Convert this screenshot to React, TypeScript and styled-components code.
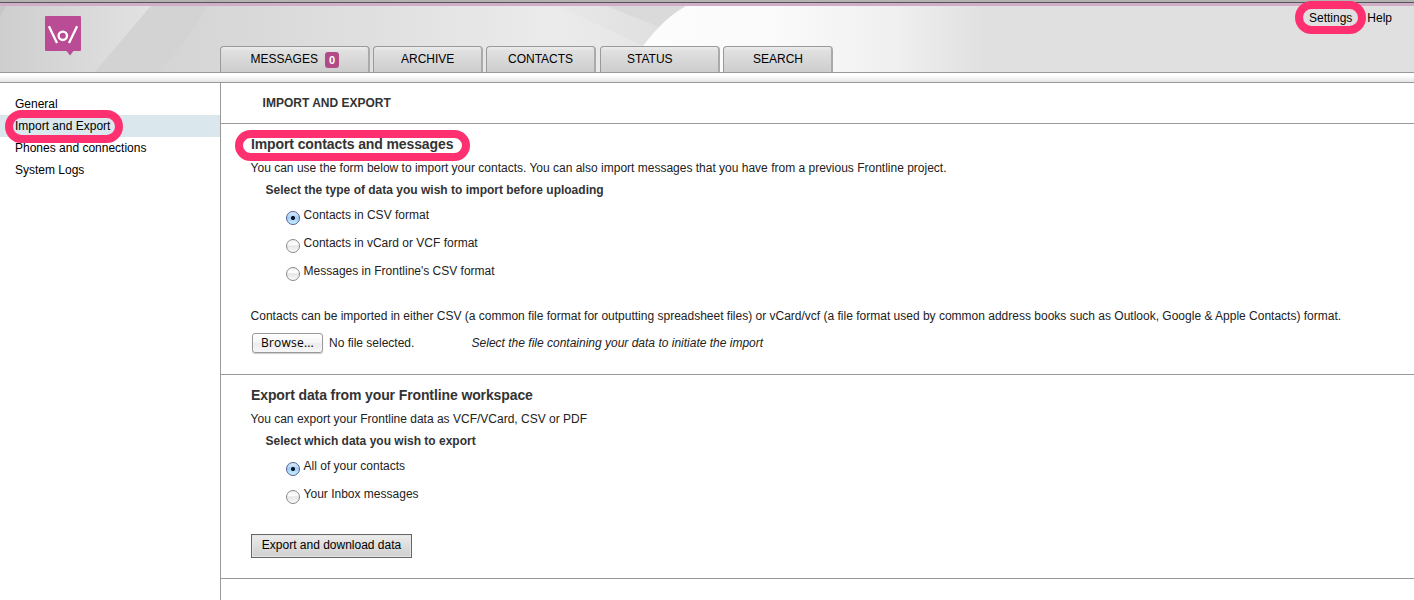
import React from "react";
import styled, { createGlobalStyle, css } from "styled-components";

const Global = createGlobalStyle`
  *, *::before, *::after { box-sizing: border-box; }
  body { margin: 0; background: #fff; color: #000; overflow: hidden;
    font: 12px/22px "Liberation Sans", Helvetica, Arial, sans-serif; }
  h1, h2, h3, p { margin: 0; font-size: 12px; }
`;

const Page = styled.div`
  display: flex;
  flex-direction: column;
  height: 600px;
  overflow: hidden;
`;

const Header = styled.header`
  position: relative;
  display: flex;
  align-items: flex-start;
  height: 73px;
  border-bottom: 1px solid #999;
  background: linear-gradient(#b3b3b3 0 2px, #555 2px 3px, #d0aec8 3px 6px, #e0e0e0 6px);
`;

const Backdrop = styled.svg`
  position: absolute;
  left: 0;
  top: 6px;
`;

const LogoLink = styled.div`
  position: relative;
  width: 220px;
  padding: 16px 0 0 45px;
  line-height: 0;
`;

const Tabs = styled.nav`
  position: relative;
  display: flex;
  gap: 3px;
  align-self: flex-end;
`;

const Tab = styled.div<{ $width: number; $left: number; $gap?: number }>`
  display: flex;
  align-items: center;
  gap: 7px;
  width: ${(p) => p.$width}px;
  height: 26px;
  margin-left: ${(p) => p.$gap ?? 0}px;
  padding: 0 0 2px ${(p) => p.$left}px;
  border: 1px solid #999;
  border-right: 2px solid #aaa;
  border-bottom: 0;
  border-radius: 4px 4px 0 0;
  background: linear-gradient(#ededed, #e0e0e0 4px, #cdcdcd);
`;

const Badge = styled.span`
  width: 14px;
  height: 16px;
  margin-top: 2px;
  border-radius: 3px;
  background: #b14a87;
  color: #fff;
  font-weight: bold;
  font-size: 11px;
  line-height: 16px;
  text-align: center;
`;

const UserLinks = styled.div`
  position: relative;
  display: flex;
  gap: 15px;
  margin-left: auto;
  padding: 7px 22px 0 0;
`;

const Strip = styled.div`
  flex: none;
  height: 10px;
  border-bottom: 1px solid #999;
  background: linear-gradient(#fff 30%, #e4e4e4);
`;

const Body = styled.div`
  display: flex;
  flex: 1;
`;

const Sidebar = styled.aside`
  width: 221px;
  padding-top: 10px;
  border-right: 1px solid #999;
`;

const SideItem = styled.div<{ $active?: boolean }>`
  height: 22px;
  padding-left: 15px;
  background: ${(p) => (p.$active ? "#dae8ed" : "transparent")};
`;

const Main = styled.main`
  flex: 1;
  color: #222;
`;

const Title = styled.h1`
  height: 41px;
  padding: 9px 0 0 41.6px;
  border-bottom: 1px solid #999;
  color: #333;
`;

const Section = styled.section<{ $height: number }>`
  height: ${(p) => p.$height}px;
  padding: 9px 0 0 30px;
  border-bottom: 1px solid #999;
  white-space: nowrap;
`;

const Heading = styled.h2`
  height: 24px;
  color: #333;
  font-size: 14px;
  letter-spacing: -0.11px;
`;

const Text = styled.p`
  margin-left: -0.4px;
`;

const FormatNote = styled(Text)`
  margin-top: 17px;
`;

const Prompt = styled.h3`
  padding-left: 14.6px;
  color: #333;
`;

const Options = styled.div`
  padding: 3px 0 0 35px;
`;

const Option = styled.label`
  display: flex;
  gap: 3.6px;
  height: 28px;
`;

const Radio = styled.span<{ $on?: boolean }>`
  width: 14px;
  height: 14px;
  margin-top: 7px;
  border: 1px solid #8a8a8a;
  border-radius: 50%;
  background: linear-gradient(#f0f0f0, #fff 35%, #e6e6e6 50%, #fafafa);
  ${(p) =>
    p.$on &&
    css`
      border-color: #4c5f9c;
      background: radial-gradient(circle, #0a1530 0 1.7px, transparent 2.4px),
        linear-gradient(#dcebfa, #a4cdf3 50%, #c8f0ff);
    `}
`;

const FileRow = styled.div`
  display: flex;
  align-items: center;
  height: 22px;
  margin-top: 5px;
  padding-left: 1px;
`;

const BrowseButton = styled.button`
  width: 71px;
  height: 20px;
  margin: 0 6px 0 0;
  padding: 0;
  border: 1px solid #9a9a9a;
  border-radius: 3px;
  background: linear-gradient(#fff, #f4f4f4 50%, #ececec 50%, #f6f6f6);
  box-shadow: 0 1px 1px #ccc;
  color: #000;
  font: 12px/18px "Open Sans", "Lucida Grande", sans-serif;
  letter-spacing: 0.2px;
`;

const FileName = styled.span`
  width: 142.6px;
`;

const ExportButton = styled.button`
  display: block;
  width: 161px;
  height: 24px;
  margin-top: 23px;
  padding: 0 0 2px;
  border: 1px solid #666;
  box-shadow: inset 0 0 0 1px #e6e6e6;
  background: linear-gradient(#ececec, #cfcfcf);
  color: #000;
  font: inherit;
  line-height: 20px;
`;

const Marked = styled.span`
  position: relative;
`;

const Ring = styled.span<{ $x: number; $y: number; $w: number; $h: number }>`
  position: absolute;
  z-index: 2;
  left: ${(p) => p.$x}px;
  top: ${(p) => p.$y}px;
  width: ${(p) => p.$w}px;
  height: ${(p) => p.$h}px;
  border: 8px solid #ff3070;
  border-radius: 17px;
`;

const Logo = () => (
  <svg width="36" height="40" viewBox="0 0 36 40">
    <path d="M1 0H35Q36 0 36 1V34Q36 35 35 35H28.5L25 39.5L21.5 35H1Q0 35 0 34V1Q0 0 1 0Z" fill="#b94c95" />
    <g fill="none" stroke="#fff" strokeWidth="2.3">
      <path d="M3.9 10.2L12 27M32.1 10.2L24 27" />
      <circle cx="17.8" cy="19.8" r="4.2" />
    </g>
  </svg>
);

const HeaderArt = () => (
  <Backdrop width="1000" height="66" viewBox="0 0 1000 66">
    <defs>
      <linearGradient id="base" x1="0" x2="1">
        <stop offset="0" stopColor="#d0d0d0" />
        <stop offset=".2" stopColor="#d6d6d6" />
        <stop offset=".36" stopColor="#dfdfdf" />
        <stop offset=".55" stopColor="#ebebeb" />
        <stop offset=".7" stopColor="#e4e4e4" />
        <stop offset="1" stopColor="#e0e0e0" />
      </linearGradient>
      <linearGradient id="beam" x1="0" x2="1">
        <stop offset="0" stopColor="#cecece" />
        <stop offset="1" stopColor="#e2e2e2" />
      </linearGradient>
      <linearGradient id="glow" x1="640" x2="985" gradientUnits="userSpaceOnUse">
        <stop offset="0" stopColor="#fdfdfd" />
        <stop offset=".4" stopColor="#fafafa" />
        <stop offset=".75" stopColor="#efefef" />
        <stop offset="1" stopColor="#e0e0e0" />
      </linearGradient>
      <linearGradient id="fold" x1="560" x2="680" gradientUnits="userSpaceOnUse">
        <stop offset="0" stopColor="#e8e8e8" />
        <stop offset="1" stopColor="#dedede" />
      </linearGradient>
    </defs>
    <rect width="1000" height="66" fill="url(#base)" />
    <path d="M0 0H151L95 66H0Z" fill="url(#beam)" />
    <path d="M0 0H6L0 10Z" fill="#c6c6c6" />
    <path d="M151 0H206Q190 34 157 66H95Z" fill="#d3d3d3" />
    <path d="M558 0H690L643 40Z" fill="url(#fold)" />
    <path d="M606 0H690L662 22Z" fill="#dadada" />
    <path d="M686 0Q664 12 643 40L620 66H1000V0Z" fill="url(#glow)" />
  </Backdrop>
);

export default function App() {
  return (
    <Page>
      <Global />
      <Header>
        <HeaderArt />
        <LogoLink><Logo /></LogoLink>
        <Tabs>
          <Tab $width={150} $left={29.6}>MESSAGES<Badge>0</Badge></Tab>
          <Tab $width={110} $left={27}>ARCHIVE</Tab>
          <Tab $width={110} $left={21}>CONTACTS</Tab>
          <Tab $width={120} $left={26} $gap={1}>STATUS</Tab>
          <Tab $width={110} $left={29}>SEARCH</Tab>
        </Tabs>
        <UserLinks>
          <Marked>Settings<Ring $x={-14} $y={-6} $w={71} $h={33} /></Marked>
          <span>Help</span>
        </UserLinks>
      </Header>
      <Strip />
      <Body>
        <Sidebar>
          <SideItem>General</SideItem>
          <SideItem $active><Marked>Import and Export<Ring $x={-10} $y={-9} $w={118} $h={33} /></Marked></SideItem>
          <SideItem>Phones and connections</SideItem>
          <SideItem>System Logs</SideItem>
        </Sidebar>
        <Main>
          <Title>IMPORT AND EXPORT</Title>
          <Section $height={251}>
            <Heading><Marked>Import contacts and messages<Ring $x={-16} $y={-6} $w={235} $h={31} /></Marked></Heading>
            <Text>You can use the form below to import your contacts. You can also import messages that you have from a previous Frontline project.</Text>
            <Prompt>Select the type of data you wish to import before uploading</Prompt>
            <Options>
              <Option><Radio $on />Contacts in CSV format</Option>
              <Option><Radio />Contacts in vCard or VCF format</Option>
              <Option><Radio />Messages in Frontline's CSV format</Option>
            </Options>
            <FormatNote>Contacts can be imported in either CSV (a common file format for outputting spreadsheet files) or vCard/vcf (a file format used by common address books such as Outlook, Google &amp; Apple Contacts) format.</FormatNote>
            <FileRow>
              <BrowseButton>Browse...</BrowseButton>
              <FileName>No file selected.</FileName>
              <em>Select the file containing your data to initiate the import</em>
            </FileRow>
          </Section>
          <Section $height={204}>
            <Heading>Export data from your Frontline workspace</Heading>
            <Text>You can export your Frontline data as VCF/VCard, CSV or PDF</Text>
            <Prompt>Select which data you wish to export</Prompt>
            <Options>
              <Option><Radio $on />All of your contacts</Option>
              <Option><Radio />Your Inbox messages</Option>
            </Options>
            <ExportButton>Export and download data</ExportButton>
          </Section>
        </Main>
      </Body>
    </Page>
  );
}
